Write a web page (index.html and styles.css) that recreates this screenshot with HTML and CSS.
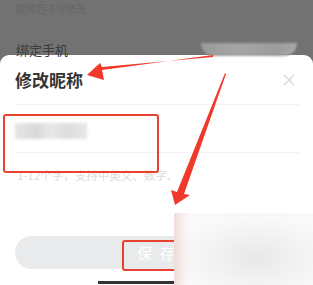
FILE: index.html
```html
<!DOCTYPE html>
<html lang="zh-CN">
<head>
    <meta charset="UTF-8">
    <meta name="viewport" content="width=device-width, initial-scale=1.0">
    <title>修改昵称</title>
    <link rel="stylesheet" href="styles.css">
</head>
<body>
    <div class="page">
        <div class="backdrop">
            <div class="note">昵称后不可修改</div>
            <div class="row">
                <span class="label">绑定手机</span>
                <span class="phone"></span>
            </div>
        </div>

        <div class="sheet">
            <div class="sheet-head">
                <h1>修改昵称</h1>
                <svg class="close" width="12" height="12" viewBox="0 0 12 12">
                    <path d="M1 1L11 11M11 1L1 11" stroke="#d6d6d6" stroke-width="1.2" fill="none"/>
                </svg>
            </div>
            <div class="field">
                <span class="blurred"></span>
            </div>
            <p class="hint">1-12个字，支持中英文、数字、</p>
            <div class="actions">
                <button class="btn">保 存</button>
            </div>
            <div class="home-bar"></div>
        </div>

        <!-- annotations -->
        <div class="mark mark-field"></div>
        <div class="mark mark-btn"></div>
        <div class="smudge"></div>
        <svg class="arrows" width="313" height="285" viewBox="0 0 313 285">
            <polygon points="213,55 102,70 104,80 87,75 100,63 102,67 213,57" fill="#f0392b"/>
            <polygon points="225,73 226,74 184,194 190,195 175,205 171,190 177,192" fill="#f0392b"/>
        </svg>
    </div>
</body>
</html>
```

FILE: styles.css
```css
body {
    margin: 0;
    font-family: "Noto Sans CJK SC", "Noto Sans", sans-serif;
}
.page {
    position: relative;
    width: 313px;
    height: 285px;
    overflow: hidden;
    background: #727272;
}
.backdrop {
    height: 55px;
    padding: 0 16px;
}
.note {
    font-size: 10px;
    line-height: 14px;
    padding-top: 2px;
    color: #666;
}
.row {
    display: flex;
    justify-content: space-between;
    align-items: flex-start;
    margin-top: 27px;
}
.label {
    font-size: 13px;
    line-height: 13px;
    color: #3c3c3c;
}
.phone {
    width: 96px;
    height: 13px;
    border-radius: 0 0 24px 24px;
    background: linear-gradient(90deg, #9a9a9a, #a6a6a6 40%, #9c9c9c 80%, #a8a8a8);
    filter: blur(1px);
}
.sheet {
    background: #fff;
    border-radius: 9px 9px 0 0;
    padding: 0 14px 0 15px;
    height: 230px;
}
.sheet-head {
    display: flex;
    justify-content: space-between;
    align-items: center;
    height: 49px;
    border-bottom: 1px solid #f1f1f1;
}
.sheet-head h1 {
    margin: 0;
    font-size: 17px;
    font-weight: 700;
    color: #333;
}
.close {
    margin-right: 4px;
}
.field {
    display: flex;
    align-items: center;
    height: 47px;
    border-bottom: 1px solid #f1f1f1;
}
.blurred {
    width: 72px;
    height: 16px;
    margin-top: 4px;
    background: linear-gradient(90deg, #e6e6e6, #d9d9d9 30%, #e8e8e8 50%, #dcdcdc 70%, #e6e6e6);
    filter: blur(1.5px);
}
.hint {
    margin: 14px 0 0 2px;
    font-size: 11.5px;
    line-height: 16px;
    color: #dcdcdc;
}
.actions {
    margin-top: 53px;
}
.btn {
    display: block;
    width: 100%;
    height: 33px;
    border: 0;
    border-radius: 17px;
    background: #e9eaeb;
    color: #fff;
    font-family: inherit;
    font-size: 15px;
    letter-spacing: 2px;
}
.home-bar {
    width: 80px;
    height: 3px;
    margin: 12px auto 0 83px;
    background: #333;
}
.mark {
    position: absolute;
    border: 2px solid #e8412f;
    border-radius: 3px;
}
.mark-field {
    left: 3px;
    top: 114px;
    width: 152px;
    height: 55px;
}
.mark-btn {
    left: 122px;
    top: 240px;
    width: 60px;
    height: 27px;
}
.smudge {
    position: absolute;
    left: 174px;
    top: 213px;
    width: 150px;
    height: 80px;
    background: radial-gradient(ellipse at 55% 55%, #e8e8ea 0%, #f4f4f5 45%, #fbfbfb 75%);
    box-shadow: inset 14px 0 12px -8px rgba(232, 190, 190, 0.6);
}
.arrows {
    position: absolute;
    left: 0;
    top: 0;
}
```
